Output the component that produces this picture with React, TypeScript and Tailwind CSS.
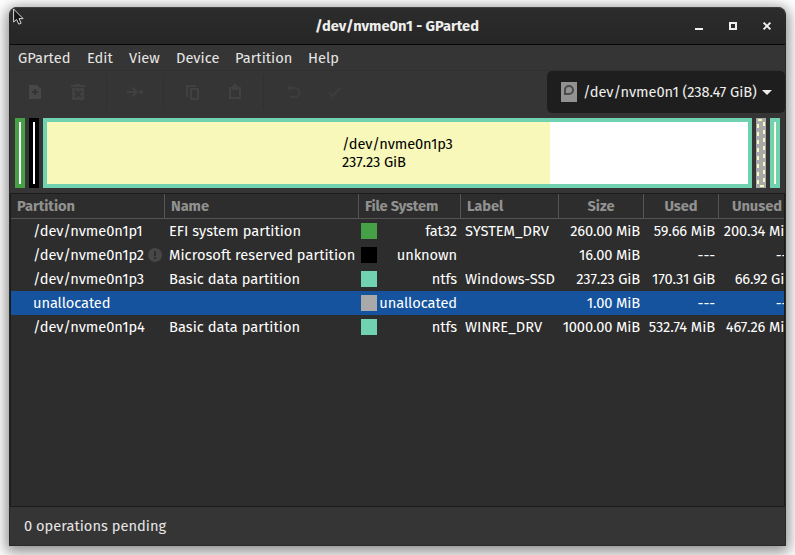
import React from "react";

type Row = {
  path: string;
  name?: string;
  warn?: boolean;
  swatch: string;
  fs: string;
  label?: string;
  size: string;
  used: string;
  unused: string;
  selected?: boolean;
};

const rows: Row[] = [
  { path: "/dev/nvme0n1p1", name: "EFI system partition", swatch: "bg-[#46a046]", fs: "fat32", label: "SYSTEM_DRV", size: "260.00 MiB", used: "59.66 MiB", unused: "200.34 MiB" },
  { path: "/dev/nvme0n1p2", name: "Microsoft reserved partition", warn: true, swatch: "bg-black", fs: "unknown", size: "16.00 MiB", used: "---", unused: "---" },
  { path: "/dev/nvme0n1p3", name: "Basic data partition", swatch: "bg-[#70d2b1]", fs: "ntfs", label: "Windows-SSD", size: "237.23 GiB", used: "170.31 GiB", unused: "66.92 GiB" },
  { path: "unallocated", swatch: "bg-[#a9a9a9]", fs: "unallocated", size: "1.00 MiB", used: "---", unused: "---", selected: true },
  { path: "/dev/nvme0n1p4", name: "Basic data partition", swatch: "bg-[#70d2b1]", fs: "ntfs", label: "WINRE_DRV", size: "1000.00 MiB", used: "532.74 MiB", unused: "467.26 MiB" },
];

const columns = "grid grid-cols-[154px_194px_102px_98px_85px_75px_79px]";

function ToolIcon({ children, className }: { children: React.ReactNode; className: string }) {
  return (
    <svg viewBox="0 0 16 16" className={`h-4 w-4 shrink-0 ${className}`} fill="none" stroke="currentColor" strokeWidth="2">
      {children}
    </svg>
  );
}

function Separator({ className }: { className: string }) {
  return <div className={`h-[34px] w-px shrink-0 bg-[#303030] ${className}`} />;
}

function TitleBar() {
  return (
    <header className="flex h-[38px] shrink-0 items-center rounded-t-[8px] border-t border-b border-t-[#404040] border-b-[#080808] bg-linear-to-b from-[#2c2c2c] to-[#262626] text-[#eeeeec]">
      <div className="w-[101px]" />
      <h1 className="flex-1 text-center font-bold tracking-[-0.04px]">/dev/nvme0n1 - GParted</h1>
      <div className="flex w-[102px] items-center gap-[18px] pl-[8px]">
        <svg className="h-4 w-4" viewBox="0 0 16 16" fill="currentColor"><path d="M4 10h8v2H4z" /></svg>
        <svg className="h-4 w-4" viewBox="0 0 16 16" fill="none" stroke="currentColor" strokeWidth="2"><path d="M5 5h6v6H5z" /></svg>
        <svg className="h-4 w-4" viewBox="0 0 16 16" fill="none" stroke="currentColor" strokeWidth="2"><path d="m4.600 4.600 6.800 6.800M11.400 4.600l-6.800 6.800" /></svg>
      </div>
    </header>
  );
}

function MenuBar() {
  return (
    <nav className="flex h-[26px] shrink-0 items-center border-b border-[#303030] pt-px pl-[8px] text-[#e6e6e4]">
      <span className="w-[69px]">GParted</span>
      <span className="w-[42px]">Edit</span>
      <span className="w-[47px]">View</span>
      <span className="w-[59px]">Device</span>
      <span className="w-[73px]">Partition</span>
      <span>Help</span>
    </nav>
  );
}

function ToolBar() {
  return (
    <div className="flex h-[42px] shrink-0 items-center text-[#414141]">
      <ToolIcon className="ml-[17px] text-[#474747]">
        <path d="M2 1h8l4 4v10H2z" fill="currentColor" stroke="none" />
        <path d="M8 5v6M5 8h6" stroke="#353535" />
      </ToolIcon>
      <ToolIcon className="ml-[27px]">
        <path d="M1 1h4V0h6v1h4v2H1zM2 4h12v12H2z" fill="currentColor" stroke="none" />
        <path d="m5 7 6 6M11 7l-6 6" stroke="#353535" />
      </ToolIcon>
      <Separator className="ml-[20px]" />
      <ToolIcon className="ml-[20px]">
        <path d="M0 8h10M5.500 3.500 10 8l-4.500 4.500" />
        <circle cx="14" cy="8" r="2" fill="currentColor" stroke="none" />
      </ToolIcon>
      <Separator className="ml-[20px]" />
      <ToolIcon className="ml-[20px]">
        <path d="M3 13V2h9M7 5h7v10H7z" />
      </ToolIcon>
      <ToolIcon className="ml-[27px]">
        <path d="M3 4h10v10H3z" />
        <path d="M5 2h1a2 2 0 0 1 4 0h1v4H5z" fill="currentColor" stroke="none" />
      </ToolIcon>
      <Separator className="ml-[20px]" />
      <ToolIcon className="ml-[21px] text-[#3d3d3d]">
        <path d="M3 4h7a4 4 0 0 1 0 9H5" />
        <path d="M1 4l5-3.500v7z" fill="currentColor" stroke="none" />
      </ToolIcon>
      <ToolIcon className="ml-[25px] text-[#3d3d3d]">
        <path d="m3 8.500 3.500 3.500 7.500-8" />
      </ToolIcon>
      <button className="ml-auto flex h-[42px] w-[238px] items-center rounded-[5px] bg-[#1e1e1e] pl-[14px] text-left text-[#eeeeec]">
        <svg className="h-5 w-4 shrink-0" viewBox="0 0 16 20">
          <path d="M0 0h16v20H0z" fill="#929292" />
          <path d="M4 12V8a4 4 0 1 1 4 4z" fill="none" stroke="#4a4a4a" strokeWidth="2" />
        </svg>
        <span className="ml-[6px] w-[175px] tracking-[-0.09px] whitespace-nowrap">/dev/nvme0n1 (238.47 GiB)</span>
        <svg className="ml-[4px] h-[5px] w-[10px] shrink-0" viewBox="0 0 10 5"><path d="M0 0h10L5 5z" fill="currentColor" /></svg>
      </button>
    </div>
  );
}

function DiskMap() {
  return (
    <div className="mt-[5px] flex h-[70px] shrink-0 gap-[4px] pl-[5px]">
      <div className="w-[10px] border-4 border-[#46a046] bg-white" />
      <div className="w-[10px] border-4 border-black bg-white" />
      <div className="flex w-[709px] border-4 border-[#70d2b1] bg-white">
        <div className="flex w-[503px] shrink-0 items-center bg-[#f8f8ba] pl-[295px] text-black">
          <div className="pb-px leading-[18px] tracking-[-0.13px] whitespace-nowrap">
            <div>/dev/nvme0n1p3</div>
            <div>237.23 GiB</div>
          </div>
        </div>
      </div>
      <svg className="h-[70px] w-[10px] shrink-0" viewBox="0 0 10 70">
        <path d="M0 0h10v70H0z" fill="#a9a9a9" />
        <path d="M2 2h6v66H2z" fill="none" stroke="#f8f8ba" strokeWidth="2" strokeDasharray="4 4" />
      </svg>
      <div className="flex w-[10px] border-4 border-[#70d2b1] bg-white">
        <div className="w-px bg-[#f8f8ba]" />
      </div>
    </div>
  );
}

function HeaderRow() {
  const cell = "flex items-center border-r border-[#555]";
  return (
    <div className={`${columns} h-[25px] border-b border-[#555] font-bold tracking-[-0.08px] text-[#919190]`}>
      <div className={`${cell} pl-[6px]`}>Partition</div>
      <div className={`${cell} pl-[6px]`}>Name</div>
      <div className={`${cell} pl-[6px] tracking-[-0.2px]`}>File System</div>
      <div className={`${cell} pl-[6px]`}>Label</div>
      <div className={`${cell} justify-center`}>Size</div>
      <div className={`${cell} justify-center`}>Used</div>
      <div className="flex items-center pl-[13px]">Unused</div>
    </div>
  );
}

function PartitionRow({ row }: { row: Row }) {
  return (
    <div className={`${columns} h-6 items-center whitespace-nowrap text-white ${row.selected ? "bg-[#15539e]" : ""}`}>
      <div className="flex items-center pl-[22px]">
        <span className="w-[115px] tracking-[-0.12px]">{row.path}</span>
        {row.warn && (
          <svg className="h-[14px] w-[14px] shrink-0" viewBox="0 0 14 14">
            <circle cx="7" cy="7" r="7" fill="#474747" />
            <path d="M6 3h2v5H6zM6 9h2v2H6z" fill="#2d2d2d" />
          </svg>
        )}
      </div>
      <div className="pl-[4px] tracking-[0.03px]">{row.name}</div>
      <div className="flex items-center pl-[2px]">
        <span className={`h-4 w-4 shrink-0 ${row.swatch}`} />
        <span className="flex-1 pr-[4px] text-right tracking-[-0.08px]">{row.fs}</span>
      </div>
      <div className="pl-[4px]">{row.label}</div>
      <div className="pr-[4px] text-right tracking-[-0.14px]">{row.size}</div>
      <div className="pr-[4px] text-right tracking-[-0.1px]">{row.used}</div>
      <div className="pr-[5px] text-right tracking-[-0.14px]">{row.unused}</div>
    </div>
  );
}

export default function App() {
  return (
    <div className="h-[555px] w-[795px] overflow-hidden bg-white px-[9px] pt-[7px] font-['Fira_Sans','Noto_Sans',sans-serif] text-[14.667px] leading-[20px]">
      <main className="relative flex h-[539px] w-[777px] flex-col rounded-t-[8px] border-r border-b border-l border-[#292929] bg-[#353535] shadow-[0_3px_14px_3px_rgba(0,0,0,0.45)]">
        <TitleBar />
        <MenuBar />
        <ToolBar />
        <DiskMap />
        <section className="mt-[5px] h-[314px] shrink-0 overflow-hidden border border-[#1b1b1b] bg-[#2d2d2d]">
          <HeaderRow />
          {rows.map((row) => (
            <PartitionRow key={row.path} row={row} />
          ))}
        </section>
        <footer className="flex flex-1 items-center pb-px pl-[14px] text-[#e6e6e4]">0 operations pending</footer>
        <svg className="absolute top-[1px] left-[3px] h-[18px] w-[12px]" viewBox="0 0 12 18">
          <path d="M.600 1v13l3-2.500 2.200 4.700 2.300-1-2-4.600h4z" fill="#161616" stroke="#d8d8d8" strokeWidth="1" />
        </svg>
      </main>
    </div>
  );
}
